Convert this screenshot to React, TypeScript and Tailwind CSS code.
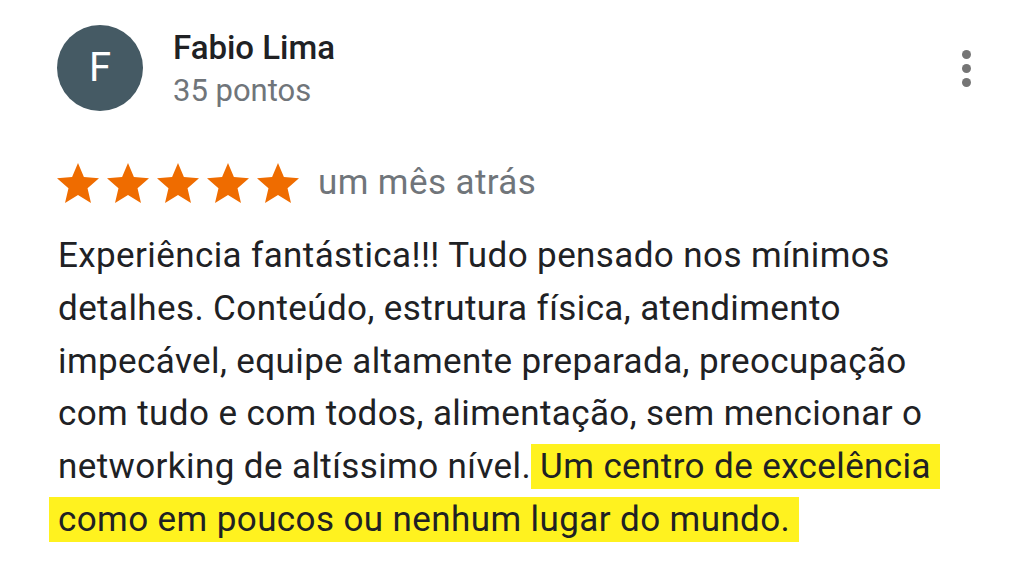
import React from "react";

const Star = () => (
  <svg width="42" height="40" viewBox="2 2 20 19" className="shrink-0">
    <path
      d="M12 17.27L18.18 21l-1.64-7.03L22 9.24l-7.19-.61L12 2 9.19 8.63 2 9.24l5.46 4.73L5.82 21z"
      fill="#ef6c00"
    />
  </svg>
);

export default function App() {
  return (
    <div
      className="w-[1024px] h-[565px] bg-white overflow-hidden"
      style={{ fontFamily: "Roboto, 'Liberation Sans', sans-serif" }}
    >
      <div className="flex items-start pt-[25px] pl-[57px] pr-[53px]">
        <div className="w-[86px] h-[86px] rounded-full bg-[#455a64] flex items-center justify-center shrink-0">
          <span className="text-white text-[40px] leading-none">F</span>
        </div>
        <div className="ml-[30px] flex flex-col flex-1 pt-[3px]">
          <div className="text-[33px] leading-[40px] font-medium text-[#202124]">Fabio Lima</div>
          <div className="text-[31px] leading-[40px] text-[#70757a] mt-[3px]">35 pontos</div>
        </div>
        <div className="flex flex-col gap-[5px] pt-[25px]">
          <div className="w-[9px] h-[9px] rounded-full bg-[#757575]" />
          <div className="w-[9px] h-[9px] rounded-full bg-[#757575]" />
          <div className="w-[9px] h-[9px] rounded-full bg-[#757575]" />
        </div>
      </div>

      <div className="flex items-center pl-[57px] mt-[52px]">
        <div className="flex gap-[8px]">
          <Star />
          <Star />
          <Star />
          <Star />
          <Star />
        </div>
        <span className="ml-[19px] text-[35px] tracking-[0.4px] leading-[40px] text-[#70757a]">
          um mês atrás
        </span>
      </div>

      <p className="pl-[58px] pr-[60px] mt-[27px] text-[35px] tracking-[0.4px] leading-[52.8px] text-[#202124]">
        Experiência fantástica!!! Tudo pensado nos mínimos detalhes. Conteúdo, estrutura física,
        atendimento impecável, equipe altamente preparada, preocupação com tudo e com todos,
        alimentação, sem mencionar o networking de altíssimo nível.{" "}
        <span className="bg-[#fff21f] box-decoration-clone shadow-[9px_0_0_#fff21f,-9px_0_0_#fff21f] py-[2px]">
          Um centro de excelência como em poucos ou nenhum lugar do mundo.
        </span>
      </p>
    </div>
  );
}
